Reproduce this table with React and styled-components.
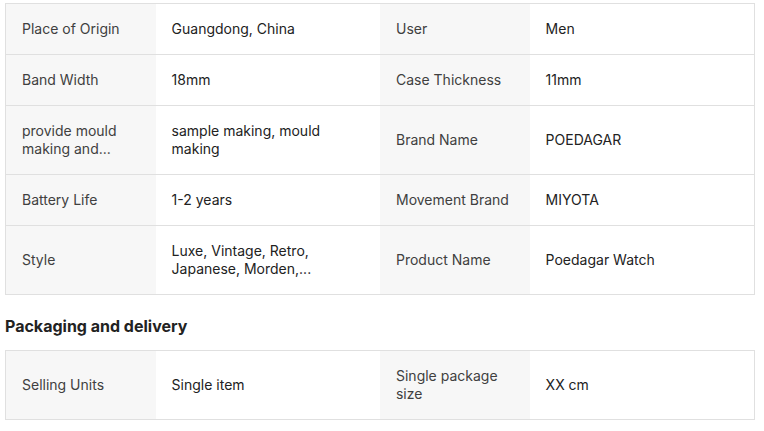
import styled, { createGlobalStyle } from "styled-components";

const GlobalStyle = createGlobalStyle`
  body {
    margin: 0;
    background: #fff;
    font-family: Inter, "Noto Sans", Arial, sans-serif;
    color: #222;
  }
`;

const Page = styled.div`
  padding: 3px 0 0 5px;
  width: 750px;
`;

const Table = styled.div`
  border: 1px solid #e0e0e0;
  border-top: none;
  display: flex;
  flex-direction: column;
`;

const Row = styled.div`
  display: grid;
  grid-template-columns: 20% 30% 20% 30%;
  border-top: 1px solid #e0e0e0;
`;

const Cell = styled.div`
  display: flex;
  align-items: center;
  padding: 16px;
  font-size: 14px;
  line-height: 18px;
  background: ${(p) => (p.$label ? "#f7f7f7" : "#fff")};
  color: ${(p) => (p.$label ? "#404040" : "#222")};
`;

const Heading = styled.h3`
  margin: 20px 0 13px;
  font-size: 16px;
  line-height: 22px;
  font-weight: 700;
  color: #222;
`;

const specs = [
  ["Place of Origin", "Guangdong, China", "User", "Men"],
  ["Band Width", "18mm", "Case Thickness", "11mm"],
  ["provide mould making and...", "sample making, mould making", "Brand Name", "POEDAGAR"],
  ["Battery Life", "1-2 years", "Movement Brand", "MIYOTA"],
  ["Style", "Luxe, Vintage, Retro, Japanese, Morden,...", "Product Name", "Poedagar Watch"],
];

const packaging = [["Selling Units", "Single item", "Single package size", "XX cm"]];

const SpecTable = ({ rows }) => (
  <Table>
    {rows.map((r, i) => (
      <Row key={i}>
        <Cell $label>{r[0]}</Cell>
        <Cell>{r[1]}</Cell>
        <Cell $label>{r[2]}</Cell>
        <Cell>{r[3]}</Cell>
      </Row>
    ))}
  </Table>
);

export default function App() {
  return (
    <>
      <GlobalStyle />
      <Page>
        <SpecTable rows={specs} />
        <Heading>Packaging and delivery</Heading>
        <SpecTable rows={packaging} />
      </Page>
    </>
  );
}
